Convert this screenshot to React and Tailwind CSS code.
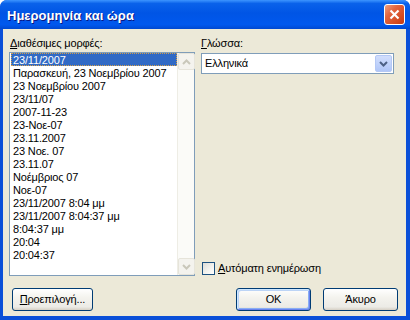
import React from "react";

const items = [
  "23/11/2007",
  "Παρασκευή, 23 Νοεμβρίου 2007",
  "23 Νοεμβρίου 2007",
  "23/11/07",
  "2007-11-23",
  "23-Νοε-07",
  "23.11.2007",
  "23 Νοε. 07",
  "23.11.07",
  "Νοέμβριος 07",
  "Νοε-07",
  "23/11/2007 8:04 μμ",
  "23/11/2007 8:04:37 μμ",
  "8:04:37 μμ",
  "20:04",
  "20:04:37",
];

function ScrollBtn({ up }) {
  return (
    <div className="w-[17px] h-[17px] rounded-[2px] border border-[#e6e4da] bg-[#f4f3ee] flex items-center justify-center">
      <svg width="9" height="6" viewBox="0 0 9 6">
        <polyline
          points={up ? "1,5 4.5,1.5 8,5" : "1,1 4.5,4.5 8,1"}
          fill="none"
          stroke="#c9c7ba"
          strokeWidth="2"
        />
      </svg>
    </div>
  );
}

function XPButton({ children, def, w }) {
  return (
    <div
      className={
        "h-[23px] rounded-[3px] border border-[#003c74] bg-[linear-gradient(180deg,#ffffff_0%,#f4f3ee_40%,#ecebe6_85%,#d6d0c5_100%)] flex items-center justify-center text-black " +
        (def
          ? "shadow-[inset_1px_1px_0_#cee7ff,inset_-1px_-1px_0_#6982ee,inset_2px_2px_0_#bcd4f6,inset_-2px_-2px_0_#89adf4]"
          : "")
      }
      style={{ width: w }}
    >
      {children}
    </div>
  );
}

export default function App() {
  return (
    <div className="w-[410px] h-[320px] bg-white font-['Liberation_Sans',Arial,sans-serif] text-[11px] tracking-[-0.15px] text-black">
      <div className="w-[410px] h-[320px] flex flex-col rounded-t-[7px] bg-[#0a4fd8] overflow-hidden">
        {/* Title bar */}
        <div className="h-[29px] shrink-0 flex items-center pl-[7px] pr-[5px] bg-[linear-gradient(180deg,#3d95ff_0%,#0a62ea_12%,#0055e5_45%,#0058ee_85%,#0048d0_100%)]">
          <div className="pt-[3px] text-white font-bold text-[13px] tracking-normal leading-[16px] [text-shadow:1px_1px_0_#0a1883]">
            Ημερομηνία και ώρα
          </div>
          <div className="ml-auto w-[21px] h-[21px] rounded-[3px] border border-white bg-[linear-gradient(135deg,#f0a080_0%,#e2653f_35%,#d44a20_75%,#c23a14_100%)] flex items-center justify-center">
            <svg width="11" height="11" viewBox="0 0 11 11">
              <line x1="1.5" y1="1.5" x2="9.5" y2="9.5" stroke="white" strokeWidth="2.2" />
              <line x1="9.5" y1="1.5" x2="1.5" y2="9.5" stroke="white" strokeWidth="2.2" />
            </svg>
          </div>
        </div>

        {/* Body */}
        <div className="flex-1 ml-[3px] mr-[4px] mb-[4px] bg-[#ece9d8] pt-[8px] px-[6px] flex flex-col">
          <div className="flex gap-[6px] h-[239px]">
            {/* Left column */}
            <div className="w-[186px] flex flex-col">
              <div className="h-[15px] leading-[13px] pl-[1px]">
                <span className="underline">Δ</span>ιαθέσιμες μορφές:
              </div>
              <div className="flex-1 border border-[#7f9db9] bg-white flex">
                <div className="flex-1 pl-[1px] flex flex-col">
                  {items.map((t, i) => (
                    <div
                      key={i}
                      className={
                        "h-[13px] leading-[12px] pl-[1px] whitespace-nowrap " +
                        (i === 0
                          ? "bg-[#316ac5] text-white border border-dotted border-[#d6a04a]"
                          : "border border-transparent")
                      }
                    >
                      {t}
                    </div>
                  ))}
                </div>
                <div className="w-[17px] bg-[#fbfbf8] border-l border-[#eeede5] flex flex-col justify-between">
                  <ScrollBtn up />
                  <ScrollBtn />
                </div>
              </div>
            </div>

            {/* Right column */}
            <div className="w-[193px] flex flex-col">
              <div className="h-[16px] leading-[13px]">
                <span className="underline">Γ</span>λώσσα:
              </div>
              <div className="h-[21px] border border-[#7f9db9] bg-white flex items-center p-[1px]">
                <div className="flex-1 pl-[2px] leading-[13px]">Ελληνικά</div>
                <div className="w-[17px] h-[17px] rounded-[2px] border border-[#b4c8f5] bg-[linear-gradient(180deg,#d2defc_0%,#c1d3fb_50%,#b0c6f7_100%)] flex items-center justify-center">
                  <svg width="9" height="6" viewBox="0 0 9 6">
                    <polyline points="1,1 4.5,4.5 8,1" fill="none" stroke="#4d6185" strokeWidth="2" />
                  </svg>
                </div>
              </div>
              <div className="flex-1" />
              <div className="flex items-center h-[14px] mb-[1px] ml-[1px]">
                <div className="w-[13px] h-[13px] border border-[#1c5180] bg-[linear-gradient(135deg,#dcdcd7_0%,#f4f4f0_60%,#ffffff_100%)]" />
                <div className="ml-[3px] leading-[13px]">
                  <span className="underline">Α</span>υτόματη ενημέρωση
                </div>
              </div>
            </div>
          </div>

          {/* Buttons */}
          <div className="flex mt-[12px] pl-[3px] pr-[2px]">
            <XPButton w={81}>
              <span>
                <span className="underline">Π</span>ροεπιλογή...
              </span>
            </XPButton>
            <div className="ml-auto flex gap-[12px]">
              <XPButton def w={75}>OK</XPButton>
              <XPButton w={75}>Άκυρο</XPButton>
            </div>
          </div>
        </div>
      </div>
    </div>
  );
}
